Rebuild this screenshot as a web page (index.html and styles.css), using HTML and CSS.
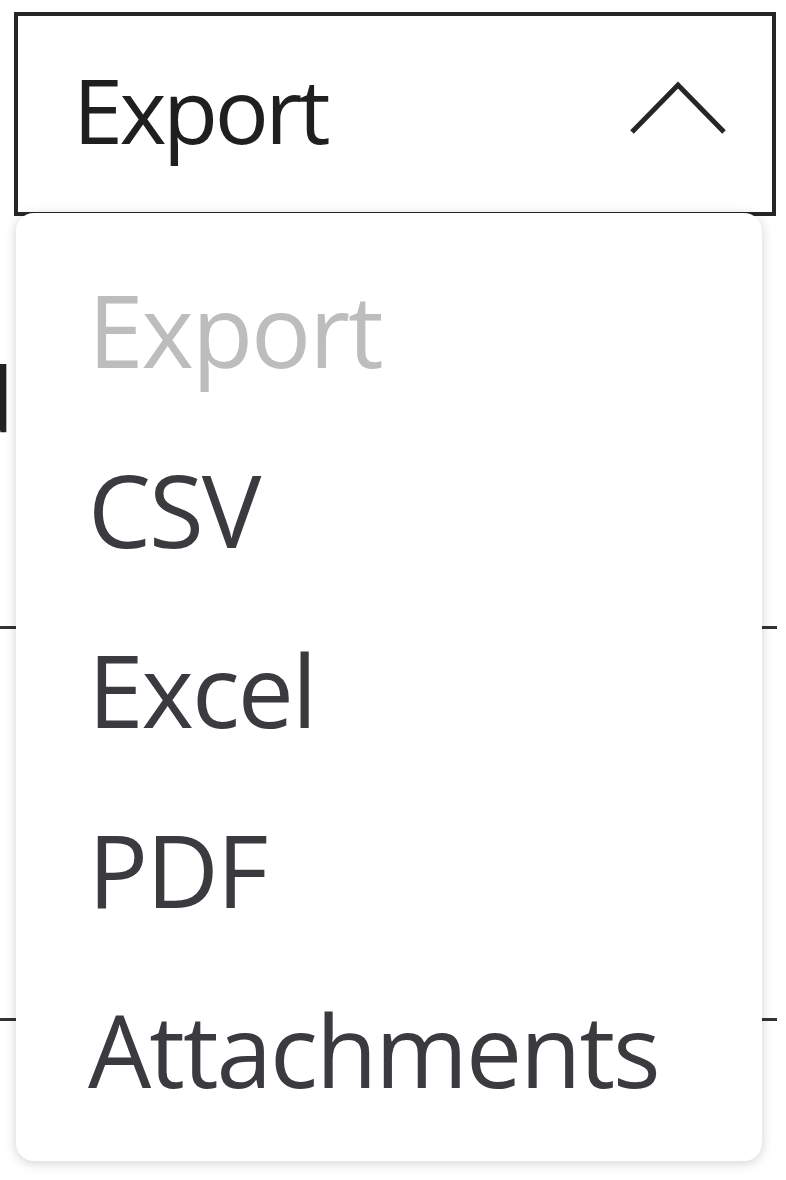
FILE: index.html
```html
<!DOCTYPE html>
<html lang="en">
<head>
    <meta charset="UTF-8">
    <meta name="viewport" content="width=device-width, initial-scale=1.0">
    <title>Export</title>
    <link rel="stylesheet" href="styles.css">
</head>
<body>

    <div class="page">
        <!-- Export select (open) -->
        <div class="export-select">
            <span class="select-label">Export</span>
            <svg class="chevron" width="96" height="54" viewBox="0 0 96 54" aria-hidden="true">
                <polyline points="2,51 48,4 94,51" fill="none" stroke="#262626" stroke-width="5"/>
            </svg>
        </div>

        <!-- Table rows behind the menu -->
        <div class="rows">
            <div class="row row-first">
                <div class="cell-tail">Updated</div>
            </div>
            <div class="row row-second"></div>
        </div>

        <!-- Dropdown menu -->
        <ul class="menu">
            <li class="menu-item placeholder">Export</li>
            <li class="menu-item">CSV</li>
            <li class="menu-item">Excel</li>
            <li class="menu-item">PDF</li>
            <li class="menu-item">Attachments</li>
        </ul>
    </div>

</body>
</html>
```

FILE: styles.css
```css
/* Reset */
* {
    margin: 0;
    padding: 0;
    box-sizing: border-box;
}

body {
    font-family: 'Open Sans', 'Noto Sans', sans-serif;
    background: #ffffff;
    width: 786px;
    height: 1180px;
    overflow: hidden;
}

.page {
    position: relative;
    padding: 12px 10px 0 14px;
}

/* Select box */
.export-select {
    display: flex;
    align-items: center;
    justify-content: space-between;
    height: 204px;
    padding: 0 46px 10px 55px;
    border: 4px solid #262626;
    background: #fff;
}

.select-label {
    font-size: 90px;
    color: #1f1f1f;
    line-height: 1;
    letter-spacing: -3.5px;
}

.chevron {
    display: block;
    margin-top: -2px;
}

/* Rows under the menu */
.rows {
    width: 777px;
    margin-left: -14px;
}

.row {
    border-bottom: 3px solid #333;
}

.row-first {
    height: 413px;
    padding-top: 120px;
}

.row-second {
    height: 392px;
}

.cell-tail {
    width: 14px;
    display: flex;
    justify-content: flex-end;
    white-space: nowrap;
    font-size: 90px;
    color: #222;
}

/* Dropdown */
.menu {
    position: absolute;
    top: 213px;
    left: 16px;
    width: 746px;
    padding: 26px 0 22px 72px;
    list-style: none;
    background: #fff;
    border-radius: 18px;
    box-shadow: 0 2px 12px rgba(0, 0, 0, 0.18);
}

.menu-item {
    font-size: 100px;
    line-height: 180px;
    color: #3b3b3f;
    letter-spacing: -2px;
}

.menu-item.placeholder {
    color: #bdbdbd;
}
```
